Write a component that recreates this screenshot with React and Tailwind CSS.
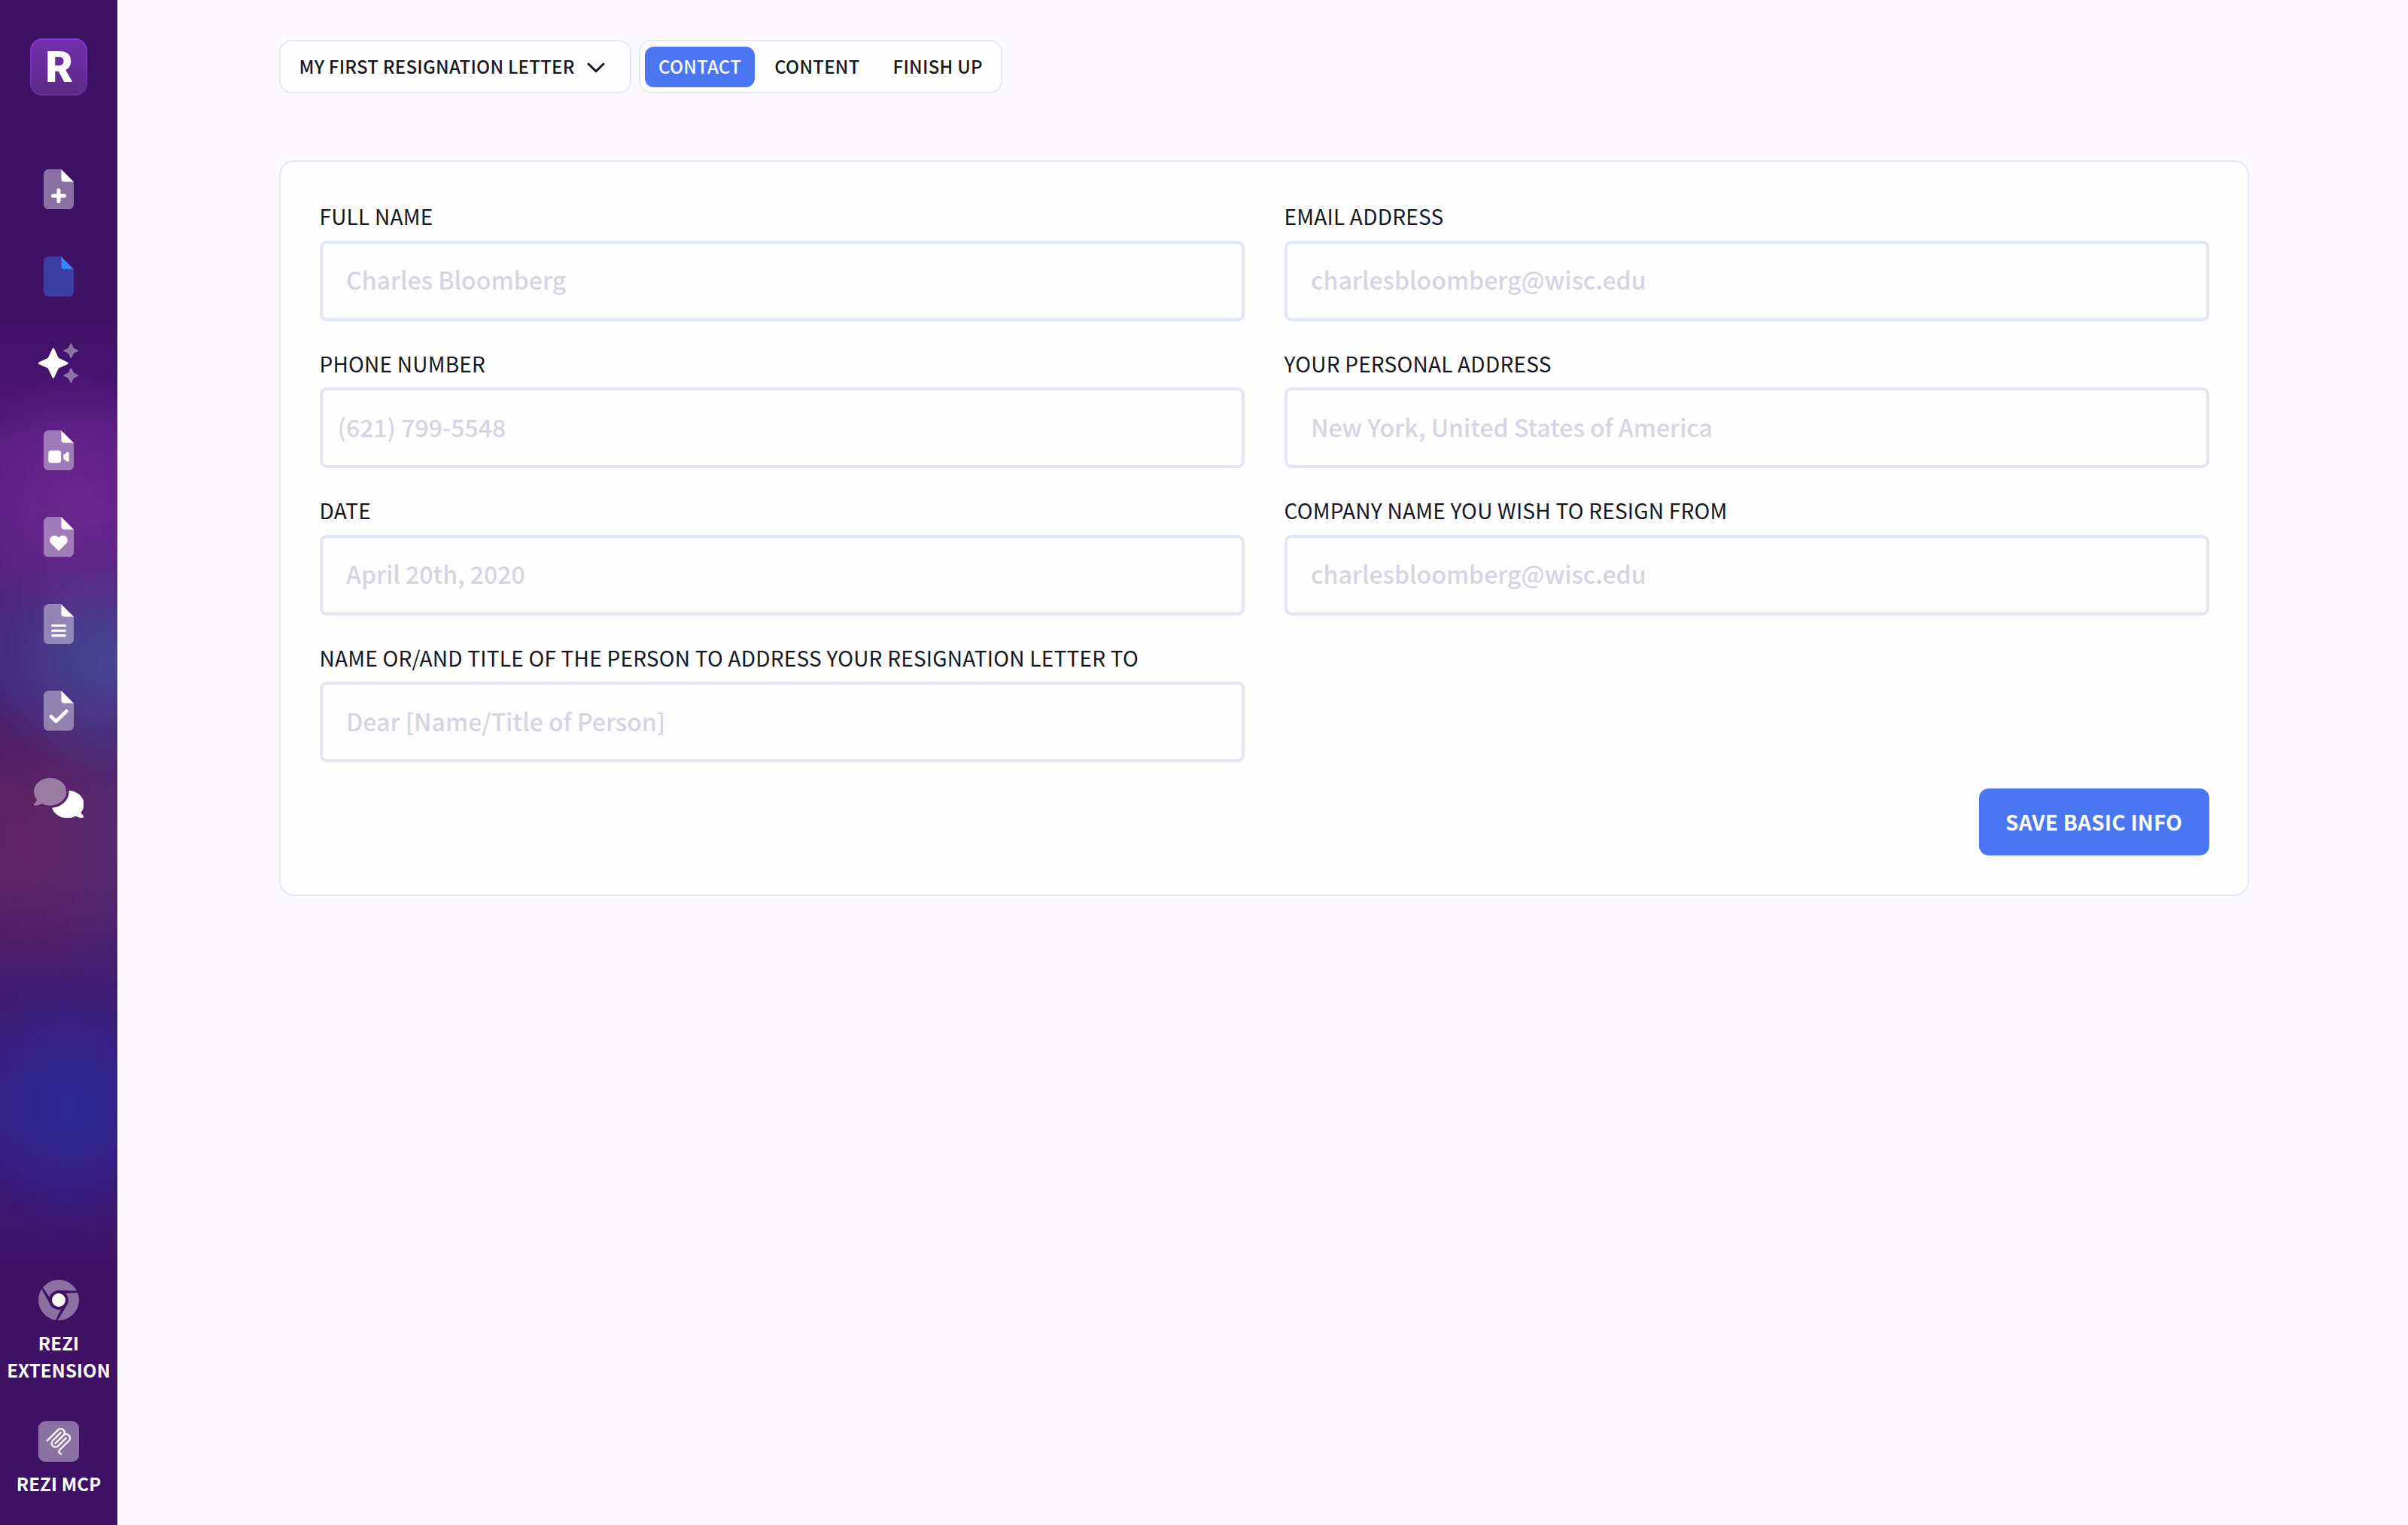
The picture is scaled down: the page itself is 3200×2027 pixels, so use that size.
const FileIcon = ({ active, children }) => (
  <svg viewBox="0 0 384 512" className={active ? 'w-[40px] h-[53.33px] text-[#3a84ff]' : 'w-[40px] h-[53.33px] text-white'} fill="currentColor">
    <path opacity={0.4} d="M0 64C0 28.7 28.7 0 64 0H224V128c0 17.7 14.3 32 32 32H384V448c0 35.3-28.7 64-64 64H64c-35.3 0-64-28.7-64-64V64z" />
    <path d="M384 160L224 0V128c0 17.7 14.3 32 32 32H384z" />
    {children}
  </svg>
);

const line = { fill: 'none', stroke: 'currentColor', strokeLinecap: 'round', strokeLinejoin: 'round' };

const Star = ({ cx, cy, r, opacity = 1 }) => {
  const k = r * 0.32;
  return (
    <path
      opacity={opacity}
      transform={`translate(${cx} ${cy})`}
      d={`M0 ${-r}L${k} ${-k}L${r} 0L${k} ${k}L0 ${r}L${-k} ${k}L${-r} 0L${-k} ${-k}Z`}
      fill="currentColor"
      stroke="currentColor"
      strokeWidth={r * 0.15}
      strokeLinejoin="round"
    />
  );
};

const SparklesIcon = () => (
  <svg viewBox="0 0 512 512" className="w-[53.33px] h-[53.33px] text-white">
    <Star cx={190} cy={256} r={178} />
    <Star cx={416} cy={98} r={90} opacity={0.4} />
    <Star cx={416} cy={414} r={90} opacity={0.4} />
  </svg>
);

const CommentsIcon = () => (
  <svg viewBox="0 0 640 512" className="w-[66.67px] h-[53.33px] text-white" fill="currentColor">
    <path opacity={0.4} d="M416 176c0 97.2-93.1 176-208 176c-38.2 0-73.9-8.7-104.7-23.9c-7.5 4-16 7.9-25.2 11.4C59.8 346.4 37.8 352 16 352c-6.9 0-13.1-4.5-15.2-11.1s.2-13.8 5.8-17.9l.2-.2c.2-.2 .6-.4 1.1-.8c1-.8 2.5-2 4.3-3.7c3.6-3.3 8.5-8.1 13.3-14.3c5.5-7 10.7-15.4 14.2-24.7C14.7 250.3 0 214.6 0 176C0 78.8 93.1 0 208 0S416 78.8 416 176z" />
    <path d="M231.5 383C348.9 372.9 448 288.3 448 176c0-5.2-.2-10.4-.6-15.5C555.1 167.1 640 243.2 640 336c0 38.6-14.7 74.3-39.6 103.4c3.5 9.4 8.7 17.7 14.2 24.7c4.8 6.2 9.7 11 13.3 14.3c1.8 1.6 3.3 2.9 4.3 3.7c.5 .4 .9 .7 1.1 .8l.2 .2c5.6 4.1 7.9 11.3 5.8 17.9c-2.1 6.6-8.3 11.1-15.2 11.1c-21.8 0-43.8-5.6-62.1-12.5c-9.2-3.5-17.8-7.4-25.2-11.4C505.9 503.3 470.2 512 432 512c-95.6 0-176.2-54.6-200.5-129z" />
  </svg>
);

const ChromeIcon = () => (
  <svg viewBox="-81 -81 162 162" className="w-[54px] h-[54px] text-white" fill="currentColor">
    <mask id="chrome-cut">
      <rect x="-81" y="-81" width="162" height="162" fill="white" />
      <circle r="38.5" fill="black" />
      {[0, 120, 240].map((a) => (
        <polygon key={a} transform={`rotate(${a})`} points="-4,-38.5 76,-37 76,-29.5 24,-26" fill="black" />
      ))}
    </mask>
    <circle r="81" opacity={0.4} mask="url(#chrome-cut)" />
    <circle r="27" />
  </svg>
);

const McpIcon = () => (
  <div className="w-[54px] h-[54px] rounded-[9px] bg-white/40 flex items-center justify-center">
    <svg viewBox="0 0 180 180" className="w-[38px] h-[38px] text-white" {...line} strokeWidth={11}>
      <path d="M18 84.8528L85.8822 16.9706C95.2548 7.59798 110.451 7.59798 119.823 16.9706C129.196 26.3431 129.196 41.5391 119.823 50.9117L68.5581 102.177" />
      <path d="M69.2652 101.47L119.823 50.9117C129.196 41.5391 144.392 41.5391 153.765 50.9117L154.118 51.2652C163.491 60.6378 163.491 75.8338 154.118 85.2063L92.7248 146.6C89.6006 149.724 89.6006 154.789 92.7248 157.913L105.331 170.52" />
      <path d="M102.853 33.9411L52.6482 84.1457C43.2756 93.5183 43.2756 108.714 52.6482 118.087C62.0208 127.459 77.2167 127.459 86.5893 118.087L136.794 67.8822" />
    </svg>
  </div>
);

const Sidebar = () => (
  <aside className="w-[156px] shrink-0 flex flex-col items-center pt-[51px] pb-[37px] text-white bg-[#3f1165] bg-[radial-gradient(150px_170px_at_105px_665px,#6f2894b0_0%,#6f289480_40%,transparent_100%),radial-gradient(170px_150px_at_145px_878px,#4a4b9ad0_0%,#4a4a9890_40%,transparent_100%),radial-gradient(170px_190px_at_40px_1125px,#672462b0_0%,#65246270_45%,transparent_100%),radial-gradient(130px_220px_at_165px_1110px,#482f7cb0_0%,#482f7c70_45%,transparent_100%),radial-gradient(130px_170px_at_92px_1472px,#2d2a98c0_0%,#2d2a9870_45%,transparent_100%),linear-gradient(180deg,#3f1165_0px,#3f1165_430px,#4b1575_530px,#581c80_590px,#5c1f84_680px,#53247e_760px,#47267a_830px,#422678_900px,#4b1f6c_980px,#521f66_1060px,#51216a_1160px,#481c6e_1250px,#3d1c74_1340px,#361f82_1440px,#361f82_1500px,#3b1773_1590px,#3f1165_1680px)]">
    <div className="w-[76px] h-[76px] shrink-0 rounded-[16px] p-[2px] bg-linear-to-b from-[#8035d2] to-[#6a2fa0]">
      <div className="w-full h-full rounded-[14px] bg-linear-to-b from-[#742fae] to-[#5b2a86] flex items-center justify-center pb-[6px] text-[54.5px] leading-none font-black">R</div>
    </div>
    <nav className="mt-[98px] flex flex-col items-center gap-[62.25px]">
      <FileIcon>
        <path {...line} strokeWidth={48} d="M120 338H264M192 266V410" />
      </FileIcon>
      <FileIcon active />
      <SparklesIcon />
      <FileIcon>
        <rect x="61" y="256" width="160" height="160" rx="32" />
        <path d="M253 315L299 279C309 272 323 278 323 291V387C323 400 309 406 299 399L253 363Z" />
      </FileIcon>
      <FileIcon>
        <path d="M192 435L96 341C70 314 73 270 102 249C130 230 165 238 186 260L192 266L198 260C219 238 254 230 282 249C311 270 314 314 288 341Z" />
      </FileIcon>
      <FileIcon>
        <path {...line} strokeWidth={30} d="M111 274H273M111 338H273M111 402H273" />
      </FileIcon>
      <FileIcon>
        <path {...line} strokeWidth={46} d="M95 330L158 391L291 263" />
      </FileIcon>
      <CommentsIcon />
    </nav>
    <div className="mt-auto flex flex-col items-center text-center text-[24px] leading-[36px] font-bold tracking-[0.15px]">
      <ChromeIcon />
      <div className="mt-[12px]">REZI<br />EXTENSION</div>
      <div className="mt-[50px]"><McpIcon /></div>
      <div className="mt-[11.5px]">REZI MCP</div>
    </div>
  </aside>
);

const tabs = ['CONTACT', 'CONTENT', 'FINISH UP'];

const Header = () => (
  <div className="flex gap-[10px] h-[71px] text-[24px] leading-[36px] font-medium tracking-[0.25px]">
    <button className="w-[468px] flex items-center pl-[24.5px] rounded-[16px] border-2 border-[#e4e8f4] bg-[#fefefe]">
      <span className="pb-[1px]">MY FIRST RESIGNATION LETTER</span>
      <svg viewBox="0 0 24 14" className="ml-[16px] mt-[3px] w-[24px] h-[14px]" {...line} strokeWidth={3}>
        <path d="M2 2L12 11.8L22 2" />
      </svg>
    </button>
    <div className="flex items-center gap-[8px] px-[6px] rounded-[16px] border-2 border-[#e4e8f4] bg-[#fefefe]">
      {tabs.map((t, i) => (
        <button key={t} className={i === 0 ? 'h-[54px] px-[18px] pb-[1px] rounded-[12px] bg-[#4a76f4] text-white' : 'h-[54px] px-[18px] pb-[1px] rounded-[12px]'}>{t}</button>
      ))}
    </div>
  </div>
);

const fields = [
  { label: 'FULL NAME', placeholder: 'Charles Bloomberg' },
  { label: 'EMAIL ADDRESS', placeholder: 'charlesbloomberg@wisc.edu' },
  { label: 'PHONE NUMBER', placeholder: '(621) 799-5548', tight: true },
  { label: 'YOUR PERSONAL ADDRESS', placeholder: 'New York, United States of America' },
  { label: 'DATE', placeholder: 'April 20th, 2020' },
  { label: 'COMPANY NAME YOU WISH TO RESIGN FROM', placeholder: 'charlesbloomberg@wisc.edu' },
  { label: 'NAME OR/AND TITLE OF THE PERSON TO ADDRESS YOUR RESIGNATION LETTER TO', placeholder: 'Dear [Name/Title of Person]' },
];

const Field = ({ label, placeholder, tight }) => (
  <label className="flex flex-col">
    <span className="text-[28px] leading-[36px] tracking-[0.24px] whitespace-nowrap">{label}</span>
    <input
      placeholder={placeholder}
      className={`mt-[14.5px] h-[107px] w-full rounded-[9px] border-4 border-[#e2e6f3] bg-[#fefefe] pb-[4px] text-[32px] font-medium placeholder:text-[#d5d4e0] placeholder:opacity-100 ${tight ? 'pl-[20px]' : 'pl-[31.5px]'}`}
    />
  </label>
);

export default function App() {
  return (
    <div className="flex w-[3200px] h-[2027px] overflow-hidden bg-[#fbf9fd] text-[#15161f] font-['Noto_Sans_CJK_SC',sans-serif]">
      <Sidebar />
      <main className="flex-1 pl-[215px] pt-[53px]">
        <Header />
        <section className="mt-[89px] w-[2618px] h-[978px] rounded-[20px] border-2 border-[#e4e8f4] bg-[#fefefe] pl-[51.5px] pr-[51.5px] pt-[54px]">
          <div className="grid grid-cols-2 gap-x-[53px] gap-y-[38px]">
            {fields.map((f) => <Field key={f.label} {...f} />)}
          </div>
          <div className="mt-[35px] flex justify-end">
            <button className="w-[306px] h-[89px] pb-[2px] rounded-[13px] bg-[#4a76f4] text-white text-[28px] font-bold tracking-[0.2px]">SAVE BASIC INFO</button>
          </div>
        </section>
      </main>
    </div>
  );
}
